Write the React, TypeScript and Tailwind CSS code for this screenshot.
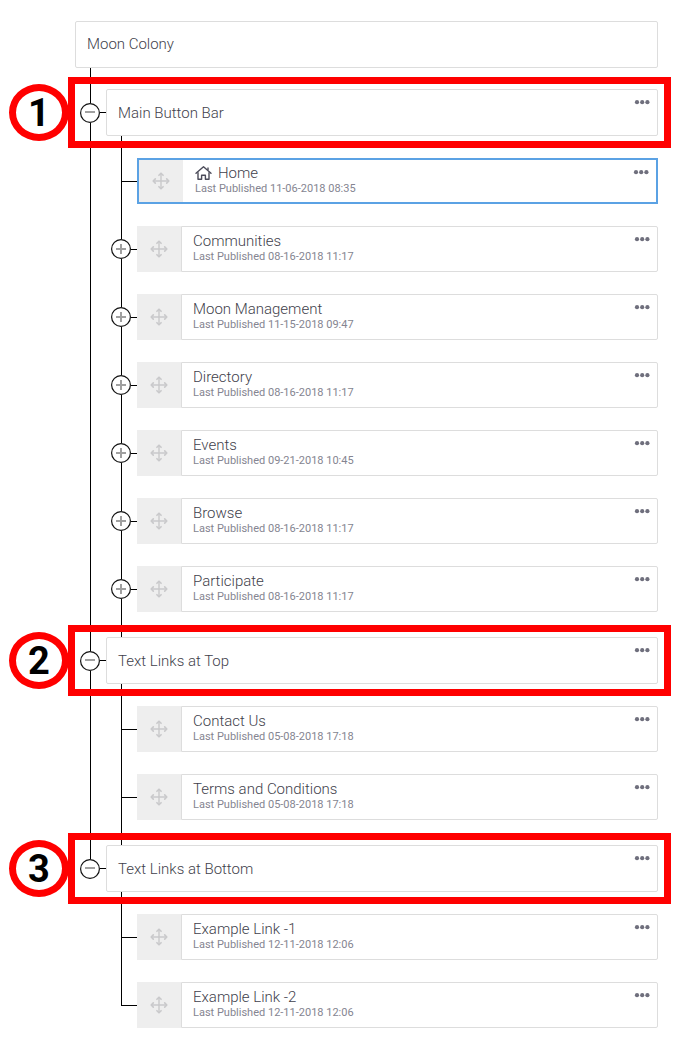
import { useState } from "react";

type Page = {
  title: string;
  published: string;
  isHome?: boolean;
  hasChildren?: boolean;
};

type Menu = {
  title: string;
  pages: Page[];
};

const MENUS: Menu[] = [
  {
    title: "Main Button Bar",
    pages: [
      { title: "Home", published: "11-06-2018 08:35", isHome: true },
      { title: "Communities", published: "08-16-2018 11:17", hasChildren: true },
      { title: "Moon Management", published: "11-15-2018 09:47", hasChildren: true },
      { title: "Directory", published: "08-16-2018 11:17", hasChildren: true },
      { title: "Events", published: "09-21-2018 10:45", hasChildren: true },
      { title: "Browse", published: "08-16-2018 11:17", hasChildren: true },
      { title: "Participate", published: "08-16-2018 11:17", hasChildren: true },
    ],
  },
  {
    title: "Text Links at Top",
    pages: [
      { title: "Contact Us", published: "05-08-2018 17:18" },
      { title: "Terms and Conditions", published: "05-08-2018 17:18" },
    ],
  },
  {
    title: "Text Links at Bottom",
    pages: [
      { title: "Example Link -1", published: "12-11-2018 12:06" },
      { title: "Example Link -2", published: "12-11-2018 12:06" },
    ],
  },
];

function MoreButton({ label }: { label: string }) {
  return (
    <button type="button" aria-label={`Options for ${label}`} className="mt-2 h-2 w-4 shrink-0 cursor-pointer">
      <svg viewBox="0 0 16 8" className="block h-2 w-4 fill-[#6f6f7d]">
        <circle cx="3" cy="4.2" r="2.1" />
        <circle cx="8.2" cy="4.2" r="2.1" />
        <circle cx="13.4" cy="4.2" r="2.1" />
      </svg>
    </button>
  );
}

function Toggle({ open, label, onClick }: { open: boolean; label: string; onClick?: () => void }) {
  return (
    <button
      type="button"
      aria-label={`${open ? "Collapse" : "Expand"} ${label}`}
      aria-expanded={open}
      onClick={onClick}
      className="relative z-10 h-5 w-5 shrink-0 cursor-pointer rounded-full bg-white"
    >
      <svg viewBox="0 0 20 20" fill="none" className="block h-5 w-5">
        <circle cx="10" cy="10" r="9.4" stroke="#111" strokeWidth="1.2" />
        <path d={open ? "M5 9H15" : "M5 10H15M10 5V15"} stroke="#a0a0a0" strokeWidth="2" />
      </svg>
    </button>
  );
}

function MoveIcon() {
  return (
    <svg viewBox="0 0 18 18" fill="none" stroke="#c9c9cb" className="h-[18px] w-[18px]">
      <path d="M9 2V16M2 9H16" strokeWidth="1.4" />
      <path
        d="M6.9 3.3L9 1.2L11.1 3.3M6.9 14.7L9 16.8L11.1 14.7M3.3 6.9L1.2 9L3.3 11.1M14.7 6.9L16.8 9L14.7 11.1"
        strokeWidth="1.6"
        strokeLinecap="round"
        strokeLinejoin="round"
      />
    </svg>
  );
}

function HomeIcon() {
  return (
    <svg viewBox="0 0 17 16" fill="none" stroke="#4b4b59" strokeWidth="1.4" className="h-4 w-[17px]">
      <path d="M1 8.3L8.5 1.7L16 8.3" strokeLinecap="round" strokeLinejoin="round" />
      <path d="M3 7.2V14.2H6.6V10.3H10.4V14.2H14V7.2M13 5V2.4" strokeLinejoin="round" />
    </svg>
  );
}

function PageRow({ page, isEnd }: { page: Page; isEnd: boolean }) {
  return (
    <li className="relative flex items-center">
      {/* rail down the left side, cut short on the very last page */}
      <span className={`absolute left-0 -top-[22px] w-px bg-black ${isEnd ? "h-[46px]" : "h-[93px]"}`} />
      {page.hasChildren ? (
        <>
          <span className="-ml-[10px] flex">
            <Toggle open={false} label={page.title} />
          </span>
          <span className="h-px w-[6px] shrink-0 bg-black" />
        </>
      ) : (
        <span className="h-px w-4 shrink-0 bg-black" />
      )}
      <div
        className={`relative flex h-[46px] min-w-0 flex-1 bg-white ${page.isHome ? "border-2 border-[#5ba2e4]" : ""}`}
      >
        <span className="flex w-11 shrink-0 cursor-move items-center justify-center bg-[#eee]">
          <MoveIcon />
        </span>
        <div
          className={`flex min-w-0 flex-1 items-start justify-between ${
            page.isHome ? "pl-3 pr-[7px]" : "rounded-r-xs border border-[#ddd] pl-[11px] pr-[7px]"
          }`}
        >
          <div className={`min-w-0 ${page.isHome ? "pt-[5px]" : "pt-[6px]"}`}>
            <p className="flex items-center gap-[6px] text-[15px] leading-4 text-[#3f3f4c]">
              {page.isHome && <HomeIcon />}
              {page.title}
            </p>
            <p className="text-[11px] leading-4 font-normal text-[#858591]">Last Published {page.published}</p>
          </div>
          <MoreButton label={page.title} />
        </div>
      </div>
    </li>
  );
}

export default function App() {
  const [closed, setClosed] = useState<string[]>([]);

  const toggle = (title: string) =>
    setClosed((prev) => (prev.includes(title) ? prev.filter((t) => t !== title) : [...prev, title]));

  return (
    <main className="bg-white pt-[21px] pr-[41px] pb-7 pl-[75px] font-[Roboto,sans-serif] font-light">
      <h1 className="relative z-10 flex h-[47px] items-center rounded-xs border border-[#ddd] bg-white px-[11px] text-[15px] text-[#3f3f4c]">
        Moon Colony
      </h1>

      <ul className="ml-[15px] flex flex-col gap-[25px] pt-[21px]">
        {MENUS.map((menu, index) => {
          const isOpen = !closed.includes(menu.title);
          const isLast = index === MENUS.length - 1;

          return (
            <li key={menu.title} className="relative">
              <span className={`absolute left-0 -top-[25px] w-px bg-black ${isLast ? "h-12" : "h-full"}`} />
              {!isLast && <span className="absolute left-0 bottom-0 h-[25px] w-px bg-black" />}

              <div className="relative flex h-[47px] items-center">
                <span className="-ml-[10px] flex">
                  <Toggle open={isOpen} label={menu.title} onClick={() => toggle(menu.title)} />
                </span>
                <span className="h-px w-[6px] shrink-0 bg-black" />
                <div className="relative z-10 flex h-full min-w-0 flex-1 items-start justify-between rounded-xs border border-[#ddd] bg-white pl-[11px] pr-[7px]">
                  <h2 className="self-center text-[15px] leading-4 text-[#3f3f4c]">{menu.title}</h2>
                  <MoreButton label={menu.title} />
                </div>

                {/* numbered callout around the menu heading */}
                <span className="pointer-events-none absolute -inset-y-3 -right-[13px] -left-[22px] z-20 border-[7px] border-[#f00]" />
                <span className="pointer-events-none absolute -left-[81px] z-20 flex h-[57px] w-[60px] items-center justify-center rounded-[50%] border-[7px] border-[#f00] font-[Roboto,sans-serif] text-[38px] leading-none font-bold text-black">
                  {index + 1}
                </span>
              </div>

              {isOpen && (
                <ul className="ml-[31px] flex flex-col gap-[22px] pt-[22px]">
                  {menu.pages.map((page, i) => (
                    <PageRow key={page.title} page={page} isEnd={isLast && i === menu.pages.length - 1} />
                  ))}
                </ul>
              )}
            </li>
          );
        })}
      </ul>
    </main>
  );
}
